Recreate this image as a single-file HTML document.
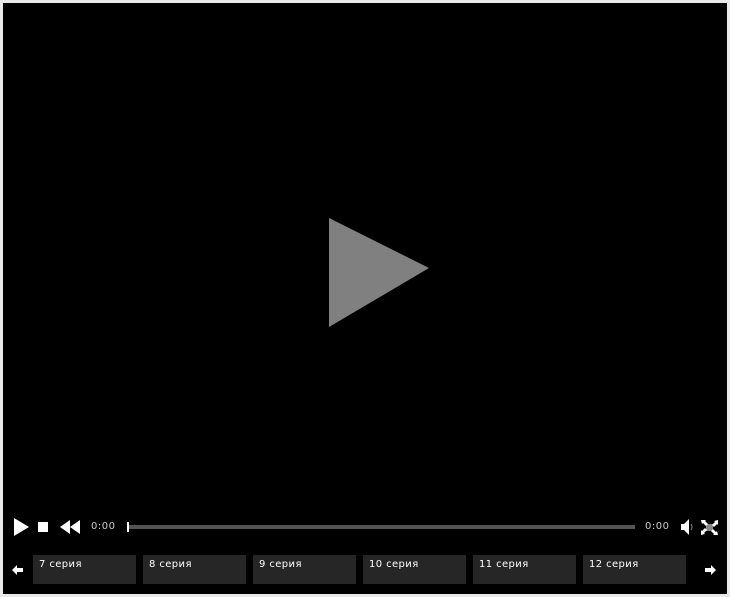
<!DOCTYPE html>
<html><head><meta charset="utf-8"><style>
html,body{margin:0;padding:0;width:730px;height:597px;background:#e9e9e9;overflow:hidden}
#p{position:absolute;left:3px;top:3px;width:724px;height:591px;background:#000}
.t{position:absolute;font-family:"DejaVu Sans","Liberation Sans",sans-serif;font-size:10px;color:#ccc;letter-spacing:0.5px}
.ep{position:absolute;top:555px;width:103px;height:29px;background:#262626}
.ep span{position:absolute;left:6px;top:4px;font-family:"DejaVu Sans","Liberation Sans",sans-serif;font-size:10px;color:#fff;letter-spacing:0.4px}
</style></head><body>
<div id="p"></div>
<svg width="730" height="597" style="position:absolute;left:0;top:0">
<polygon points="329,218 329,327 429,268" fill="#808080"/>
<polygon points="14,518 14,536 29,527" fill="#fff"/>
<rect x="38" y="522" width="10" height="10" fill="#fff"/>
<polygon points="60,527 70,520 70,534" fill="#fff"/>
<polygon points="70,527 80,520 80,534" fill="#fff"/>
<rect x="127" y="525" width="508" height="4" fill="#555"/>
<rect x="127" y="522" width="2" height="10" fill="#fff"/>
<polygon points="681,524 684,524 689,519 689,535 684,530 681,530" fill="#fff"/>
<path d="M691,524 q2,3 0,6" stroke="#888" fill="none"/>
<rect x="706" y="524" width="7" height="7" fill="#888"/>
<path d="M701,520 h5 l-1,1 3,3 -2,2 -3,-3 -1,1z M718,520 v5 l-1,-1 -3,3 -2,-2 3,-3 -1,-1z M701,535 v-5 l1,1 3,-3 2,2 -3,3 1,1z M718,535 h-5 l1,-1 -3,-3 2,-2 3,3 1,-1z" fill="#fff"/>
<polygon points="12,570 17,565 17,568 23,568 23,572 17,572 17,575" fill="#fff"/>
<polygon points="716,570 711,565 711,568 705,568 705,572 711,572 711,575" fill="#fff"/>
</svg>
<div class="t" style="left:91px;top:521px">0:00</div>
<div class="t" style="left:645px;top:521px">0:00</div>
<div class="ep" style="left:33px"><span>7 серия</span></div>
<div class="ep" style="left:143px"><span>8 серия</span></div>
<div class="ep" style="left:253px"><span>9 серия</span></div>
<div class="ep" style="left:363px"><span>10 серия</span></div>
<div class="ep" style="left:473px"><span>11 серия</span></div>
<div class="ep" style="left:583px"><span>12 серия</span></div>
</body></html>
